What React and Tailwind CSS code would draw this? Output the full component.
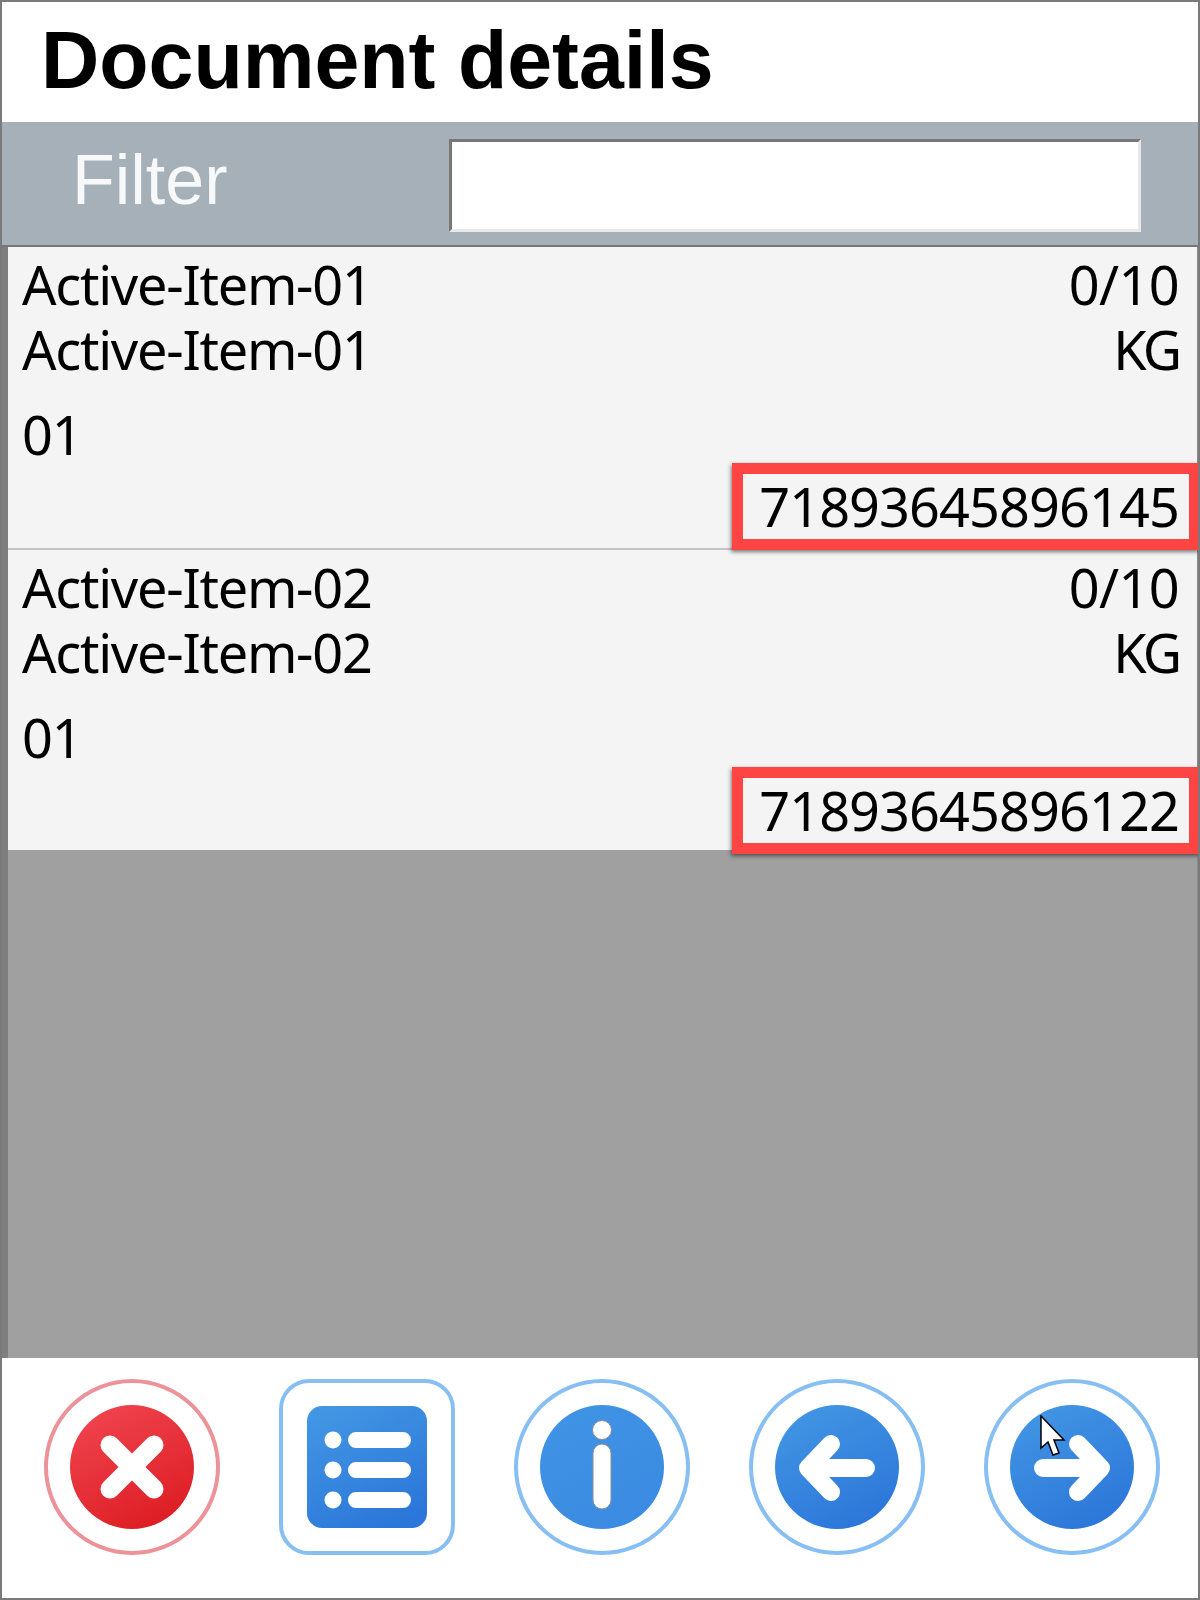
import React from "react";

const itemFont = "font-['Noto_Sans',sans-serif] text-[54px] leading-[65px] tracking-[-1.25px] text-black";

function Row({ name, code, last }) {
  return (
    <div className={`bg-[#f4f4f4] pl-[14px] pr-[18px] pt-[5px] ${itemFont} ${last ? "h-[300px]" : "h-[303px] border-b-2 border-[#c4c4c4]"}`}>
      <div className="flex justify-between">
        <span>{name}</span>
        <span className="tracking-[-0.6px]">0/10</span>
      </div>
      <div className="flex justify-between">
        <span>{name}</span>
        <span className="tracking-[-3px]">KG</span>
      </div>
      <div className="mt-[20px]">01</div>
      <div className={`flex justify-end tracking-[-0.9px] ${last ? "mt-[8px]" : "mt-[7px]"}`}>
        <div className="relative">
          <div className="absolute -left-[27px] -right-[21px] -top-[11px] -bottom-[11px] border-[11px] border-[#ff4444] shadow-[-1px_2px_4px_rgba(0,0,0,0.5)]"></div>
          {code}
        </div>
      </div>
    </div>
  );
}

function Ring({ children, color = "#88bff2" }) {
  return (
    <svg width="176" height="176" viewBox="-88 -88 176 176">
      <circle cx="0" cy="0" r="86" fill="white" stroke={color} strokeWidth="4" />
      {children}
    </svg>
  );
}

function Grad({ id, from, to }) {
  return (
    <defs>
      <linearGradient id={id} x1="0.2" y1="0" x2="0.7" y2="1">
        <stop offset="0" stopColor={from} />
        <stop offset="1" stopColor={to} />
      </linearGradient>
    </defs>
  );
}

function CloseIcon() {
  return (
    <Ring color="#ec939a">
      <Grad id="red" from="#f0444f" to="#dd1d23" />
      <circle r="62" fill="url(#red)" />
      <path d="M-22 -22L22 22M22 -22L-22 22" stroke="white" strokeWidth="19" strokeLinecap="round" />
    </Ring>
  );
}

function ListIcon() {
  return (
    <svg width="176" height="176" viewBox="-88 -88 176 176">
      <rect x="-86" y="-86" width="172" height="172" rx="28" fill="white" stroke="#88bff2" strokeWidth="4" />
      <Grad id="blueList" from="#4296e4" to="#2b76d9" />
      <rect x="-60" y="-61" width="120" height="122" rx="15" fill="url(#blueList)" />
      <circle cx="-34" cy="-27" r="8.5" fill="white" />
      <circle cx="-34" cy="3" r="8.5" fill="white" />
      <circle cx="-34" cy="33" r="8.5" fill="white" />
      <path d="M-11 -27H36M-11 3H36M-11 33H36" stroke="white" strokeWidth="16" strokeLinecap="round" />
    </svg>
  );
}

function InfoIcon() {
  return (
    <Ring>
      <Grad id="blueInfo" from="#3f93e4" to="#3a8be2" />
      <circle r="62" fill="url(#blueInfo)" />
      <circle cx="0" cy="-37" r="9.5" fill="white" stroke="#8a8f96" strokeWidth="1" />
      <rect x="-9" y="-23" width="18" height="65" rx="9" fill="white" stroke="#8a8f96" strokeWidth="1" />
    </Ring>
  );
}

function BackIcon() {
  return (
    <Ring>
      <Grad id="blueBack" from="#4296e4" to="#2b76d9" />
      <circle r="62" fill="url(#blueBack)" />
      <path d="M-6 -23L-29 1L-6 25M-29 1H29" fill="none" stroke="white" strokeWidth="18" strokeLinecap="round" strokeLinejoin="round" />
    </Ring>
  );
}

function NextIcon() {
  return (
    <Ring>
      <Grad id="blueNext" from="#4296e4" to="#2b76d9" />
      <circle r="62" fill="url(#blueNext)" />
      <path d="M6 -23L29 1L6 25M29 1H-29" fill="none" stroke="white" strokeWidth="18" strokeLinecap="round" strokeLinejoin="round" />
    </Ring>
  );
}

export default function App() {
  return (
    <div className="relative w-[1200px] h-[1600px] flex flex-col border-2 border-[#7a7a7a] bg-white overflow-hidden">
      <div className="h-[120px] shrink-0 pl-[39px] pt-[12px] font-['Liberation_Sans',sans-serif] font-bold text-[80.7px] leading-[92px] text-black">
        Document details
      </div>

      <div className="h-[125px] shrink-0 flex items-start bg-[#a6b0b8] border-b-2 border-[#777]">
        <div className="w-[447px] pl-[70px] pt-[18px] font-['Liberation_Sans',sans-serif] text-[70px] leading-[80px] text-[#f6f8f9]">
          Filter
        </div>
        <div className="mt-[17px] w-[692px] h-[93px] bg-white border-t-[3px] border-l-[3px] border-t-[#777] border-l-[#777] border-r-[3px] border-b-[3px] border-r-[#e8e8e8] border-b-[#e8e8e8]"></div>
      </div>

      <div className="flex-1 flex flex-col border-l-[6px] border-[#7f7f7f] border-r border-r-[#8a8a8a] bg-[#a0a0a0]">
        <Row name="Active-Item-01" code="71893645896145" />
        <Row name="Active-Item-02" code="71893645896122" last />
      </div>

      <div className="h-[240px] shrink-0 bg-white flex items-start justify-between pl-[42px] pr-[38px] pt-[21px]">
        <CloseIcon />
        <ListIcon />
        <InfoIcon />
        <BackIcon />
        <NextIcon />
      </div>

      <svg className="absolute left-[1038px] top-[1413px]" width="28" height="42" viewBox="0 0 28 42">
        <path d="M1 1V33L8 27L13 40L19 38L14 25H24Z" fill="white" stroke="black" strokeWidth="1.5" />
      </svg>
    </div>
  );
}
